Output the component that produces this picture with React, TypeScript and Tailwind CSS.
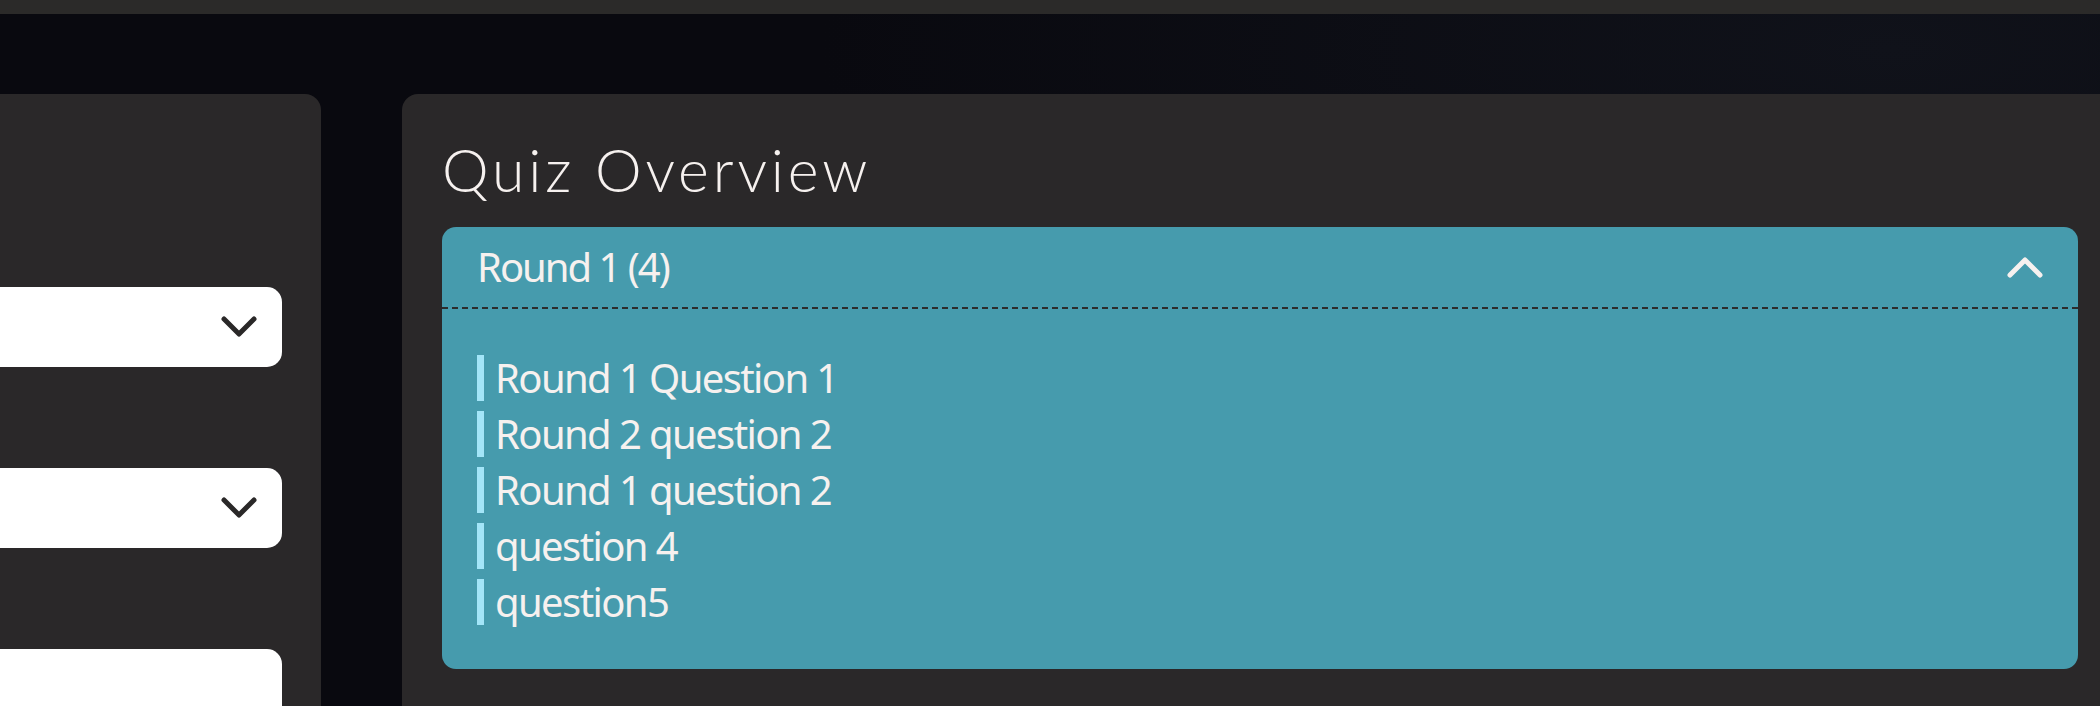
import React from "react";

// Quiz overview screen (cropped view)

const questions = [
  "Round 1 Question 1",
  "Round 2 question 2",
  "Round 1 question 2",
  "question 4",
  "question5",
];

function Chevron({ up = false, color }: { up?: boolean; color: string }) {
  return (
    <svg width="36" height="22" viewBox="0 0 36 22" fill="none">
      <path
        d={up ? "M3 19 L18 4 L33 19" : "M3 3 L18 18 L33 3"}
        stroke={color}
        strokeWidth="5"
        strokeLinecap="round"
        strokeLinejoin="round"
      />
    </svg>
  );
}

function SelectBox({ arrow = true }: { arrow?: boolean }) {
  return (
    <div className="h-[80px] w-[282px] rounded-r-[15px] bg-white flex items-center justify-end pr-[25px]">
      {arrow && <Chevron color="#2a2828" />}
    </div>
  );
}

export default function App() {
  return (
    <div className="w-full h-[706px] overflow-hidden flex flex-col bg-[#09090f] font-['Noto_Sans',sans-serif]">
      <div className="h-[14px] bg-[#2b2a29] shrink-0" />

      <div className="flex flex-1 pt-[80px] gap-[81px] bg-[radial-gradient(ellipse_at_90%_5%,#10121a_0%,#09090f_40%)]">
        {/* left panel with selects */}
        <div className="w-[321px] shrink-0 bg-[#2a2829] rounded-tr-[16px] pt-[193px] flex flex-col gap-[101px]">
          <SelectBox />
          <SelectBox />
          <SelectBox arrow={false} />
        </div>

        {/* overview panel */}
        <div className="flex-1 bg-[#2a2829] rounded-tl-[16px] pl-[40px] pr-[22px]">
          <h1 className="mt-[46px] text-[59px] leading-none font-light text-[#f6f1ef] font-['Lato',sans-serif] tracking-[0.065em]">
            Quiz Overview
          </h1>

          <div className="mt-[28px] rounded-[14px] bg-[#469bad] text-[#f6f1ef]">
            <div className="h-[82px] px-[35px] flex items-center justify-between border-b-2 border-dashed border-[#2c2c2c]">
              <span className="text-[40px] tracking-[-0.05em] leading-none">Round 1 (4)</span>
              <Chevron up color="#f6f1ef" />
            </div>
            <ul className="px-[35px] pt-[46px] pb-[44px] flex flex-col gap-[10px]">
              {questions.map((q) => (
                <li key={q} className="flex items-center h-[46px]">
                  <span className="w-[7px] h-[46px] bg-[#a3e5f8]" />
                  <span className="ml-[11px] text-[40px] leading-[46px] tracking-[-0.04em]">{q}</span>
                </li>
              ))}
            </ul>
          </div>
        </div>
      </div>
    </div>
  );
}
